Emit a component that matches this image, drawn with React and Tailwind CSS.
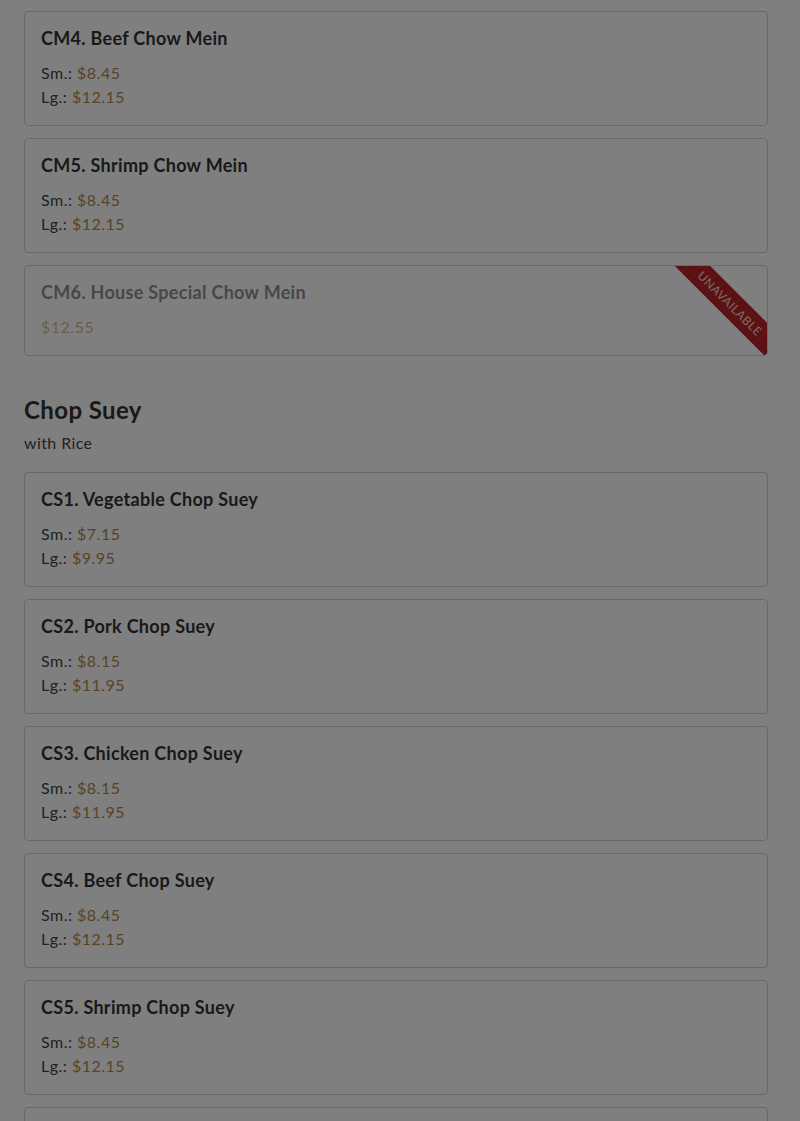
const chowMein = [
  { code: 'CM4', name: 'Beef Chow Mein', sm: '$8.45', lg: '$12.15' },
  { code: 'CM5', name: 'Shrimp Chow Mein', sm: '$8.45', lg: '$12.15' },
  { code: 'CM6', name: 'House Special Chow Mein', price: '$12.55', unavailable: true },
]

const chopSuey = [
  { code: 'CS1', name: 'Vegetable Chop Suey', sm: '$7.15', lg: '$9.95' },
  { code: 'CS2', name: 'Pork Chop Suey', sm: '$8.15', lg: '$11.95' },
  { code: 'CS3', name: 'Chicken Chop Suey', sm: '$8.15', lg: '$11.95' },
  { code: 'CS4', name: 'Beef Chop Suey', sm: '$8.45', lg: '$12.15' },
  { code: 'CS5', name: 'Shrimp Chop Suey', sm: '$8.45', lg: '$12.15' },
  { code: 'CS6', name: 'House Special Chop Suey', sm: '$8.95', lg: '$12.55' },
]

const MenuCard = ({ item }) => (
  <div className="relative overflow-hidden rounded border border-[#d3d3d3] bg-white px-4 py-4">
    <div className={item.unavailable ? 'opacity-[0.55]' : ''}>
      <h3 className="text-[18px] font-bold leading-[21px] tracking-[0.3px] text-[#333]">
        {item.code}. {item.name}
      </h3>
      <div className="mt-3 text-[16px] leading-6 tracking-[0.5px] text-[#444]">
        {item.price ? (
          <p className="text-[#b0874a]">{item.price}</p>
        ) : (
          <>
            <p>Sm.: <span className="text-[#b0874a]">{item.sm}</span></p>
            <p>Lg.: <span className="text-[#b0874a]">{item.lg}</span></p>
          </>
        )}
      </div>
    </div>
    {item.unavailable && (
      <div className="absolute right-[-63px] top-[25px] flex h-[25px] w-[200px] rotate-45 items-center justify-center bg-[#b8242a] text-[12px] uppercase tracking-[0.5px] text-[#f4d4d4]">
        Unavailable
      </div>
    )}
  </div>
)

const App = () => {
  return (
    <div className="relative h-[1121px] overflow-hidden bg-white font-['Lato','Noto_Sans',sans-serif]">
      <main className="pl-6 pr-8 pt-[11px]">
        <div className="flex flex-col gap-3">
          {chowMein.map((item) => <MenuCard key={item.code} item={item} />)}
        </div>

        <section className="mt-[38px]">
          <h2 className="text-[24px] font-bold leading-8 tracking-[0.4px] text-[#333]">Chop Suey</h2>
          <p className="mt-[5px] text-[16px] leading-6 tracking-[0.4px] text-[#444]">with Rice</p>
          <div className="mt-[17px] flex flex-col gap-3">
            {chopSuey.map((item) => <MenuCard key={item.code} item={item} />)}
          </div>
        </section>
      </main>

      {/* modal backdrop */}
      <div className="fixed inset-0 bg-black/50"></div>
    </div>
  )
}

export default App
